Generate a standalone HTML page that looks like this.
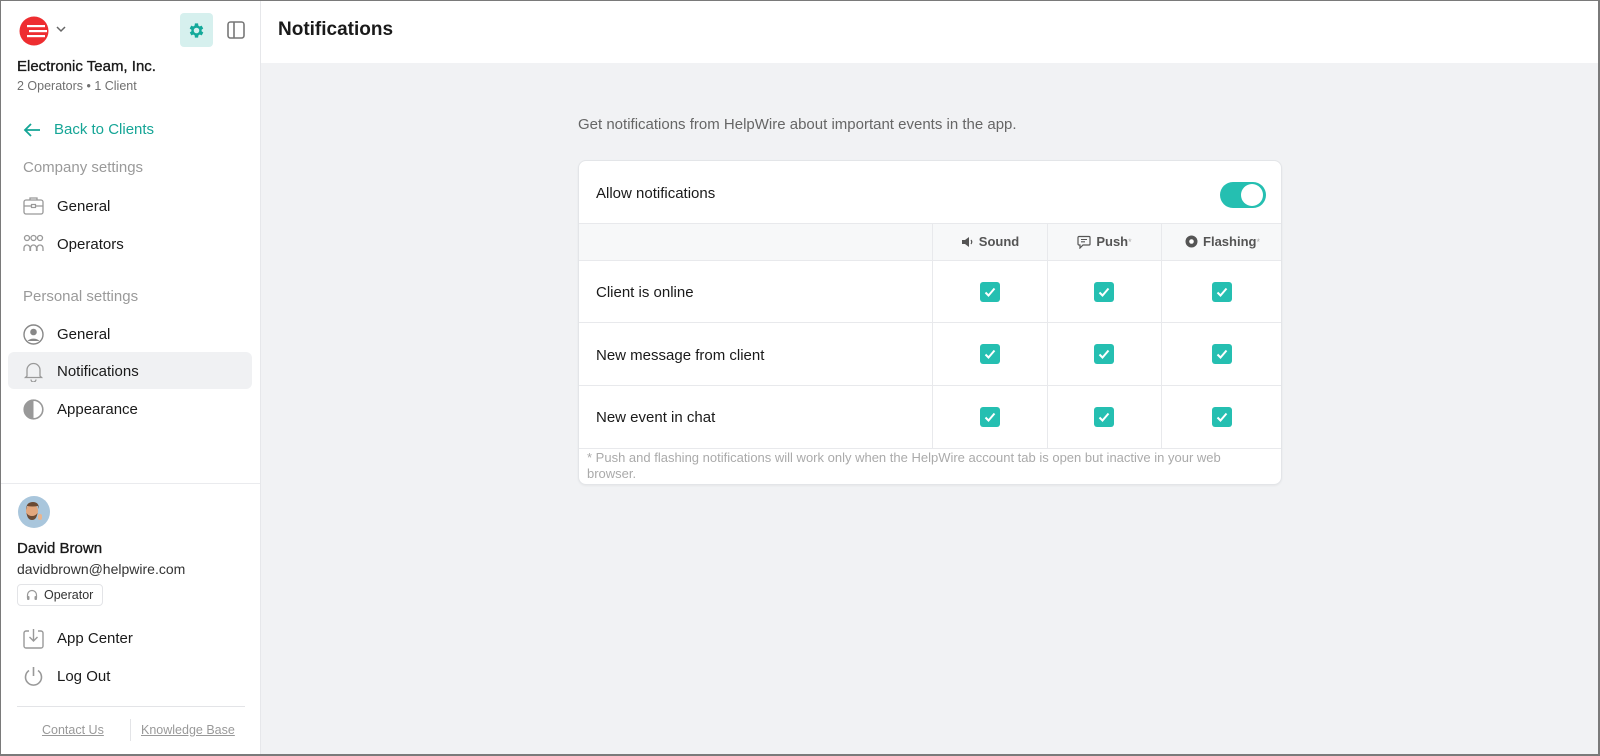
<!DOCTYPE html>
<html><head><meta charset="utf-8"><style>
*{box-sizing:border-box;margin:0;padding:0}
body{width:1600px;height:756px;overflow:hidden;font-family:"Liberation Sans",sans-serif;color:#1a1a1a;background:#fff;position:relative}
.frame{position:absolute;inset:0;border:1px solid #7a7a7a;border-right-width:2px;border-bottom-width:2px;z-index:10;pointer-events:none}
.side{position:absolute;left:0;top:0;width:261px;height:756px;border-right:1px solid #e6e7ea;background:#fff}
.main{position:absolute;left:261px;top:0;right:0;height:756px;background:#f1f2f4}
.hdr{height:63px;background:#fff;padding-left:17px;font-size:19px;font-weight:bold;line-height:60px}
.a{position:absolute;white-space:nowrap}
.nav{position:absolute;left:23px;font-size:15px;display:flex;align-items:center}
.nav svg{margin-right:13px}
.card{position:absolute;left:317px;top:160px;width:704px;height:325px;background:#fff;border:1px solid #e3e5e8;border-radius:8px;overflow:hidden;box-shadow:0 1px 2px rgba(0,0,0,.05)}
.hl{position:absolute;left:0;right:0;height:1px;background:#e8e9ec}
.vl{position:absolute;width:1px;background:#e8e9ec;top:62px;height:226px}
.cb{position:absolute;width:20px;height:20px;background:#25bfb1;border-radius:3px}
.cb svg{position:absolute;left:3px;top:3px}
.th{position:absolute;top:62px;height:37px;font-size:13px;font-weight:bold;color:#555;display:flex;align-items:center;justify-content:center}
.med{font-weight:normal;-webkit-text-stroke:0.35px #1a1a1a}
</style></head><body>
<div class="frame"></div>
<div class="side">
  <svg class="a" style="left:19px;top:16px" width="30" height="30" viewBox="0 0 30 30"><circle cx="15" cy="15" r="14.5" fill="#ee2d30"/><rect x="8" y="9" width="18" height="2.2" fill="#fff"/><rect x="10" y="14" width="18" height="2.2" fill="#fff"/><rect x="8" y="19" width="18" height="2.2" fill="#fff"/></svg>
  <svg class="a" style="left:56px;top:26px" width="10" height="7" viewBox="0 0 10 7"><path d="M1 1l4 4 4-4" stroke="#666" stroke-width="1.5" fill="none"/></svg>
  <div class="a" style="left:180px;top:13px;width:33px;height:34px;background:#d6f0ee;border-radius:4px"></div>
  <svg class="a" style="left:187px;top:21px" width="19" height="19" viewBox="0 0 24 24"><path fill="#13a99a" d="M19.4 13a7.5 7.5 0 000-2l2.1-1.6-2-3.5-2.5 1a7 7 0 00-1.7-1L15 3h-4l-.4 2.9a7 7 0 00-1.7 1l-2.5-1-2 3.5L6.6 11a7.5 7.5 0 000 2l-2.1 1.6 2 3.5 2.5-1a7 7 0 001.7 1L11 21h4l.4-2.9a7 7 0 001.7-1l2.5 1 2-3.5zM13 15.5a3.5 3.5 0 110-7 3.5 3.5 0 010 7z" transform="translate(-1 0)"/></svg>
  <svg class="a" style="left:227px;top:21px" width="18" height="18" viewBox="0 0 18 18"><rect x="1" y="1" width="16" height="16" rx="2.5" fill="none" stroke="#777" stroke-width="1.6"/><path d="M7 1v16" stroke="#777" stroke-width="1.6"/></svg>
  <div class="a med" style="left:17px;top:58px;font-size:15px">Electronic Team, Inc.</div>
  <div class="a" style="left:17px;top:79px;font-size:12.5px;color:#707070">2 Operators • 1 Client</div>
  <div class="nav" style="top:121px;color:#15a596"><svg width="18" height="16" viewBox="0 0 18 16"><path d="M17 8H2M8 2L2 8l6 6" stroke="#15a596" stroke-width="1.8" fill="none"/></svg><span>Back to Clients</span></div>
  <div class="a" style="left:23px;top:159px;font-size:15px;color:#9a9a9a">Company settings</div>
  <div class="nav" style="top:196px"><svg width="21" height="20" viewBox="0 0 21 20"><rect x="1" y="4" width="19" height="14" rx="2" fill="none" stroke="#999" stroke-width="1.3"/><path d="M7 4V2h7v2M1 10h19" stroke="#999" stroke-width="1.3" fill="none"/><rect x="8.5" y="8.5" width="4" height="3" fill="#fff" stroke="#999" stroke-width="1.2"/></svg>General</div>
  <div class="nav" style="top:234px"><svg width="21" height="20" viewBox="0 0 21 20"><g fill="none" stroke="#999" stroke-width="1.3"><circle cx="4" cy="4" r="2.5"/><circle cx="10.5" cy="4" r="2.5"/><circle cx="17" cy="4" r="2.5"/><path d="M1 17v-3a3 3 0 016 0v3M7.5 17v-3a3 3 0 016 0v3M14 17v-3a3 3 0 016 0v3"/></g></svg>Operators</div>
  <div class="a" style="left:23px;top:288px;font-size:15px;color:#9a9a9a">Personal settings</div>
  <div class="nav" style="top:324px"><svg width="21" height="21" viewBox="0 0 21 21"><circle cx="10.5" cy="10.5" r="9.5" fill="none" stroke="#888" stroke-width="1.4"/><circle cx="10.5" cy="8" r="3.3" fill="#888"/><path d="M4.5 17a7 5 0 0112 0" fill="#888"/></svg>General</div>
  <div class="a" style="left:8px;top:352px;width:244px;height:37px;background:#f0f1f3;border-radius:6px"></div>
  <div class="nav" style="top:361px"><svg width="21" height="21" viewBox="0 0 21 21"><path d="M4 15V9a6.5 6.5 0 0113 0v6l1.5 1.5h-16zM8 18.5a2.5 2.5 0 005 0" fill="none" stroke="#999" stroke-width="1.3"/></svg>Notifications</div>
  <div class="nav" style="top:399px"><svg width="21" height="21" viewBox="0 0 21 21"><circle cx="10.5" cy="10.5" r="9.3" fill="none" stroke="#999" stroke-width="1.6"/><path d="M10.5 1.2a9.3 9.3 0 000 18.6z" fill="#999"/></svg>Appearance</div>
  <div class="a" style="left:0;top:483px;width:260px;height:1px;background:#eaebee"></div>
  <svg class="a" style="left:18px;top:496px" width="32" height="32" viewBox="0 0 32 32"><circle cx="16" cy="16" r="16" fill="#a9c6dc"/><ellipse cx="14" cy="15" rx="6" ry="7" fill="#e2a77e"/><path d="M8 14q0-8 7-8 6 0 6 7l-1-3q-5 1-11 0z" fill="#6b4a34"/><path d="M8.5 17q1 7 5.5 7 4.5 0 5.5-7-2 3-5.5 3-3.5 0-5.5-3z" fill="#6b4a34"/><rect x="20" y="18" width="4" height="6" rx="2" fill="#e9b48e"/></svg>
  <div class="a med" style="left:17px;top:540px;font-size:15px">David Brown</div>
  <div class="a" style="left:17px;top:561px;font-size:14px;color:#333">davidbrown@helpwire.com</div>
  <div class="a" style="left:17px;top:584px;width:86px;height:22px;border:1px solid #e3e4e7;border-radius:4px;font-size:12.5px;color:#333;line-height:20px;padding-left:26px">Operator</div>
  <svg class="a" style="left:26px;top:589px" width="12" height="12" viewBox="0 0 12 12"><path d="M1.5 9V6a4.5 4.5 0 019 0v3" fill="none" stroke="#999" stroke-width="1.2"/><rect x="1" y="7" width="2.5" height="4" rx="1" fill="#999"/><rect x="8.5" y="7" width="2.5" height="4" rx="1" fill="#999"/></svg>
  <div class="nav" style="top:628px"><svg width="21" height="21" viewBox="0 0 21 21"><path d="M6 3H3a2 2 0 00-2 2v13a2 2 0 002 2h15a2 2 0 002-2V5a2 2 0 00-2-2h-3M10.5 1v12M6.5 9l4 4 4-4" fill="none" stroke="#999" stroke-width="1.4"/></svg>App Center</div>
  <div class="nav" style="top:666px"><svg width="21" height="21" viewBox="0 0 21 21"><path d="M6 4.5a8 8 0 109 0M10.5 1v9" fill="none" stroke="#999" stroke-width="1.6"/></svg>Log Out</div>
  <div class="a" style="left:17px;top:706px;width:228px;height:1px;background:#e3e4e7"></div>
  <div class="a" style="left:42px;top:723px;font-size:12.5px;color:#999;text-decoration:underline">Contact Us</div>
  <div class="a" style="left:130px;top:719px;width:1px;height:22px;background:#e3e4e7"></div>
  <div class="a" style="left:141px;top:723px;font-size:12.5px;color:#999;text-decoration:underline">Knowledge Base</div>
</div>
<div class="main">
  <div class="hdr">Notifications</div>
  <div class="a" style="left:317px;top:116px;font-size:15px;color:#666">Get notifications from HelpWire about important events in the app.</div>
  <div class="card">
    <div class="a" style="left:17px;top:24px;font-size:15px">Allow notifications</div>
    <div class="a" style="left:641px;top:21px;width:46px;height:26px;border-radius:13px;background:#25bfb1"></div>
    <div class="a" style="left:662px;top:23px;width:22px;height:22px;border-radius:11px;background:#fff"></div>
    <div class="a" style="left:0;top:62px;width:704px;height:37px;background:#f7f8f9"></div>
    <div class="hl" style="top:62px"></div><div class="hl" style="top:99px"></div><div class="hl" style="top:161px"></div><div class="hl" style="top:224px"></div><div class="hl" style="top:287px"></div>
    <div class="vl" style="left:353px"></div><div class="vl" style="left:468px"></div><div class="vl" style="left:582px"></div>
    <div class="th" style="left:354px;width:114px"><svg width="13" height="12" viewBox="0 0 13 12" style="margin-right:5px"><path d="M1 4h3l4-3v10L4 8H1z" fill="#555"/><path d="M10 4q1.5 2 0 4" stroke="#555" fill="none" stroke-width="1.2"/></svg>Sound</div>
    <div class="th" style="left:469px;width:113px"><svg width="14" height="14" viewBox="0 0 14 14" style="margin-right:5px"><path d="M2 1.5h10a1 1 0 011 1V9a1 1 0 01-1 1H6l-3 3v-3H2a1 1 0 01-1-1V2.5a1 1 0 011-1z" fill="none" stroke="#555" stroke-width="1.2"/><path d="M4 4.5h6M4 6.8h4" stroke="#555" stroke-width="1.1"/></svg>Push<sup style="color:#aaa;font-weight:normal;font-size:9px">*</sup></div>
    <div class="th" style="left:583px;width:121px"><svg width="13" height="13" viewBox="0 0 13 13" style="margin-right:5px"><circle cx="6.5" cy="6.5" r="6" fill="#555"/><circle cx="6.5" cy="6.5" r="2.3" fill="#fff"/></svg>Flashing<sup style="color:#aaa;font-weight:normal;font-size:9px">*</sup></div>
    <div class="a" style="left:17px;top:123px;font-size:15px">Client is online</div>
    <div class="a" style="left:17px;top:186px;font-size:15px">New message from client</div>
    <div class="a" style="left:17px;top:248px;font-size:15px">New event in chat</div>
    <div class="a" style="left:8px;top:289px;width:670px;font-size:13px;line-height:16px;color:#aaa;white-space:normal">* Push and flashing notifications will work only when the HelpWire account tab is open but inactive in your web browser.</div>
    <div class="cb" style="left:401px;top:121px"><svg width="14" height="14" viewBox="0 0 14 14"><path d="M2.5 7.5l3 3 6-7" stroke="#fff" stroke-width="2" fill="none"/></svg></div>
    <div class="cb" style="left:515px;top:121px"><svg width="14" height="14" viewBox="0 0 14 14"><path d="M2.5 7.5l3 3 6-7" stroke="#fff" stroke-width="2" fill="none"/></svg></div>
    <div class="cb" style="left:633px;top:121px"><svg width="14" height="14" viewBox="0 0 14 14"><path d="M2.5 7.5l3 3 6-7" stroke="#fff" stroke-width="2" fill="none"/></svg></div>
    <div class="cb" style="left:401px;top:183px"><svg width="14" height="14" viewBox="0 0 14 14"><path d="M2.5 7.5l3 3 6-7" stroke="#fff" stroke-width="2" fill="none"/></svg></div>
    <div class="cb" style="left:515px;top:183px"><svg width="14" height="14" viewBox="0 0 14 14"><path d="M2.5 7.5l3 3 6-7" stroke="#fff" stroke-width="2" fill="none"/></svg></div>
    <div class="cb" style="left:633px;top:183px"><svg width="14" height="14" viewBox="0 0 14 14"><path d="M2.5 7.5l3 3 6-7" stroke="#fff" stroke-width="2" fill="none"/></svg></div>
    <div class="cb" style="left:401px;top:246px"><svg width="14" height="14" viewBox="0 0 14 14"><path d="M2.5 7.5l3 3 6-7" stroke="#fff" stroke-width="2" fill="none"/></svg></div>
    <div class="cb" style="left:515px;top:246px"><svg width="14" height="14" viewBox="0 0 14 14"><path d="M2.5 7.5l3 3 6-7" stroke="#fff" stroke-width="2" fill="none"/></svg></div>
    <div class="cb" style="left:633px;top:246px"><svg width="14" height="14" viewBox="0 0 14 14"><path d="M2.5 7.5l3 3 6-7" stroke="#fff" stroke-width="2" fill="none"/></svg></div>
  </div>
</div>
</body></html>
